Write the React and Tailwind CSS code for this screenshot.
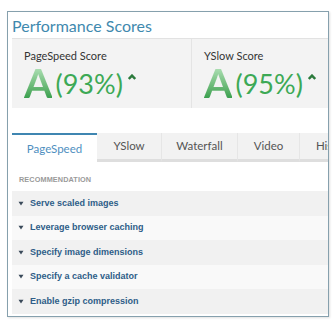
import React from "react";

const scores = [
  { label: "PageSpeed Score", grade: "A", pct: "(93%)" },
  { label: "YSlow Score", grade: "A", pct: "(95%)" },
];

const tabs = [
  { name: "PageSpeed", w: "w-[85px]", active: true },
  { name: "YSlow", w: "w-[65px]" },
  { name: "Waterfall", w: "w-[76px]" },
  { name: "Video", w: "w-[62px]" },
  { name: "History", w: "w-[70px]" },
];

const recs = [
  "Serve scaled images",
  "Leverage browser caching",
  "Specify image dimensions",
  "Specify a cache validator",
  "Enable gzip compression",
];

const Caret = () => (
  <svg width="8" height="6" viewBox="0 0 8 6" className="ml-[5px] mt-[10px] self-start">
    <path d="M0.8 5 L4 1.6 L7.2 5" fill="none" stroke="#2b7a3c" strokeWidth="2.4" />
  </svg>
);

const Tri = () => (
  <svg width="6" height="5" viewBox="0 0 6 5" className="mr-[6px]">
    <path d="M0.5 0.8 H5.5 L3 4.5 Z" fill="#3a4a5a" />
  </svg>
);

const App = () => {
  return (
    <div className="w-[335px] h-[322px] bg-white pl-[7px] pt-[11px] font-['Lato',sans-serif]">
      <div className="w-[322px] h-[306px] border border-[#86a0ad] overflow-hidden shadow-[1px_1px_2px_rgba(0,0,0,0.12)]">
        <h1 className="h-[26px] pl-[4px] pt-[4px] text-[16px] leading-[20px] text-[#3f89ae]">
          Performance Scores
        </h1>

        <div className="ml-[4px] flex w-[420px] h-[70px] bg-[#f3f3f3] border-t border-[#e2e2e2]">
          {scores.map((s, i) => (
            <div
              key={s.label}
              className={`w-[180px] shrink-0 pl-[12px] pt-[10px] ${i === 0 ? "border-r border-[#e4e4e4]" : ""}`}
            >
              <div className="text-[11px] leading-[14px] text-[#333]">{s.label}</div>
              <div className="flex items-end mt-[1px] h-[36px]">
                <span className="text-[41px] leading-[34px] font-bold bg-gradient-to-b from-[#b3e3ba] to-[#2f9c48] bg-clip-text text-transparent">
                  {s.grade}
                </span>
                <span className="ml-[3px] text-[27px] leading-[32px] text-[#3ca955]">{s.pct}</span>
                <Caret />
              </div>
            </div>
          ))}
        </div>

        <div className="mt-[25px] ml-[4px] flex w-[400px] h-[29px]">
          {tabs.map((t) =>
            t.active ? (
              <div
                key={t.name}
                className={`${t.w} shrink-0 border-t-2 border-[#3f86b1] bg-white flex items-center justify-center text-[11.5px] text-[#4f8fbf]`}
              >
                {t.name}
              </div>
            ) : (
              <div
                key={t.name}
                className={`${t.w} shrink-0 bg-[#f2f2f2] border-r border-[#e6e6e6] border-b-[3px] border-b-[#dedede] flex items-center justify-center text-[11.5px] text-[#555]`}
              >
                {t.name}
              </div>
            )
          )}
        </div>

        <div className="ml-[11px] mt-[13px] h-[16px] text-[7.3px] font-bold tracking-[0.1px] text-[#9a9a9a] font-['Liberation_Sans',sans-serif]">
          RECOMMENDATION
        </div>

        <div className="ml-[4px] font-['Liberation_Sans',sans-serif]">
          {recs.map((r, i) => (
            <div
              key={r}
              className={`h-[24.5px] flex items-center pl-[6px] text-[9px] font-bold text-[#2e5d88] ${i % 2 === 0 ? "bg-[#f1f1f1]" : "bg-[#f9f9f9]"}`}
            >
              <Tri />
              {r}
            </div>
          ))}
        </div>
      </div>
    </div>
  );
};

export default App;
